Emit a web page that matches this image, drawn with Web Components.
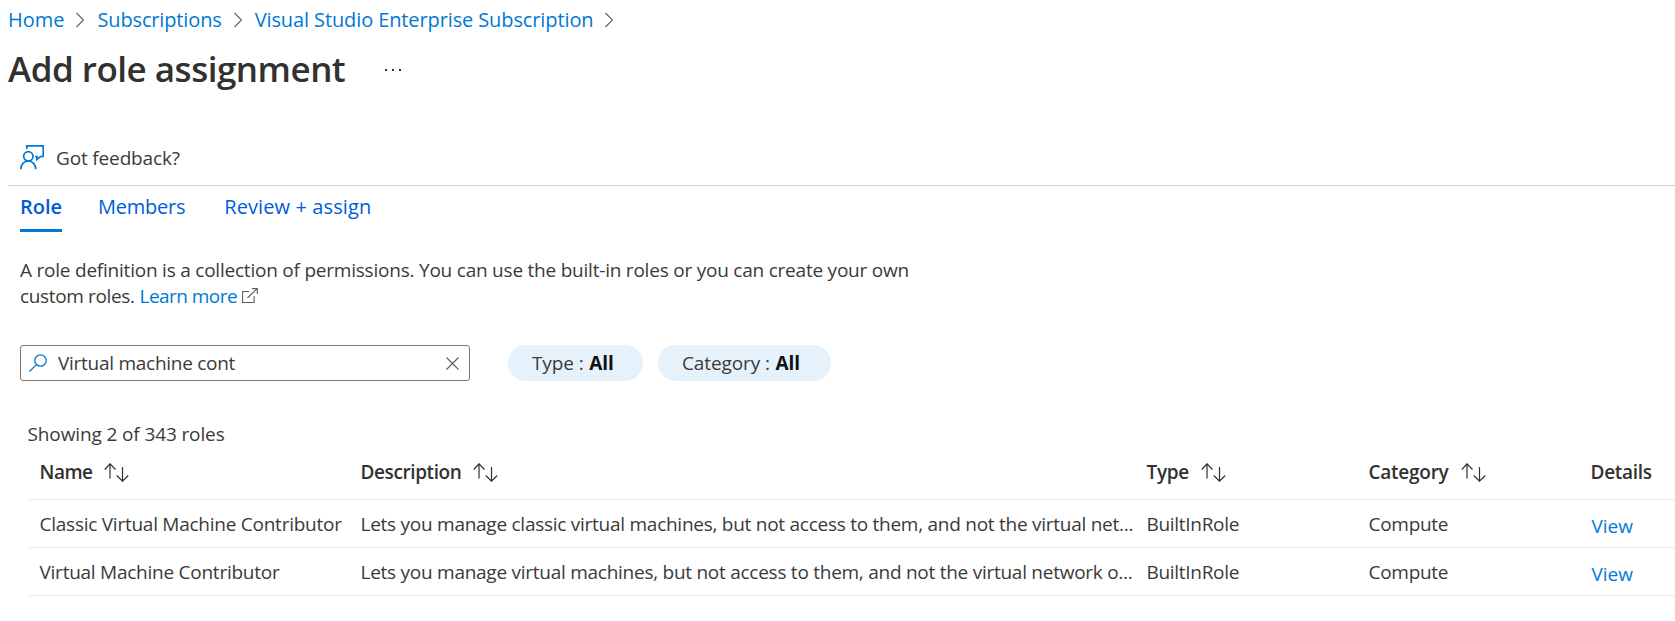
<!DOCTYPE html>
<html lang="en">
<head>
<meta charset="utf-8">
<title>Add role assignment</title>
<style>
html,body{margin:0;background:#fff}
body{font-family:"Open Sans","Noto Sans",sans-serif;font-size:19px;color:#3b3a39;overflow:hidden}
</style>
</head>
<body>
<role-page></role-page>
<script>
const define = (name, html, setup) => {
  const tpl = document.createElement('template');
  tpl.innerHTML = html;
  customElements.define(name, class extends HTMLElement {
    constructor() {
      super();
      this.attachShadow({mode: 'open'}).append(tpl.content.cloneNode(true));
    }
    connectedCallback() { if (setup) setup(this, this.shadowRoot); }
  });
};

// letter-spaced text run
define('ui-text', `<style>:host{display:inline-block;white-space:pre}</style><slot></slot>`, el => {
  if (el.hasAttribute('ls')) el.style.letterSpacing = el.getAttribute('ls') + 'px';
});

define('bread-crumbs', `
<style>
:host{display:flex;align-items:center;height:39px;padding-left:8px;font-size:20px;line-height:38px;color:#0078d4}
svg{flex:none;margin-top:0}
.a{margin:0 13px 0 12px}
</style>
<ui-text ls="-0.02">Home</ui-text>
<svg class="a" width="8" height="16" viewBox="0 0 8 16"><path d="M.5 1 7.5 8 .5 15" fill="none" stroke="#605e5c" stroke-width="1.1"/></svg>
<ui-text ls="-0.14">Subscriptions</ui-text>
<svg class="a" width="8" height="16" viewBox="0 0 8 16"><path d="M.5 1 7.5 8 .5 15" fill="none" stroke="#605e5c" stroke-width="1.1"/></svg>
<ui-text ls="-0.11">Visual Studio Enterprise Subscription</ui-text>
<svg class="a" width="8" height="16" viewBox="0 0 8 16"><path d="M.5 1 7.5 8 .5 15" fill="none" stroke="#605e5c" stroke-width="1.1"/></svg>`);

define('page-title', `
<style>
:host{display:flex;height:60px;padding-left:8px;font-size:35px;font-weight:600;line-height:60px;color:#323130}
svg{margin:30px 0 0 40px}
</style>
<ui-text ls="-0.5"><slot></slot></ui-text>
<svg width="17" height="3" viewBox="0 0 17 3" fill="#323130"><path d="M0 0h2v2H0zM7 0h2v2H7zM14 0h2v2h-2z"/></svg>`);

define('command-bar', `
<style>
:host{display:flex;height:55px;margin:32px 0 0 8px;padding:0 0 0 12px;border-bottom:1px solid #d2d0ce;box-sizing:border-box;line-height:55px}
svg{margin:14px 11px 0 0;flex:none}
</style>
<svg width="25" height="25" viewBox="0 0 25 25" fill="none" stroke="#0078d4" stroke-width="1.7"><circle cx="8.300" cy="11.300" r="4.700"/><path d="M.8 24.200c0-4.700 3.300-8.200 7.500-8.200s7.500 3.500 7.500 8.200M6.800 4V.9h16.400v10.600h-2.700l-3.600 3v-3h-1.800"/></svg>
<ui-text ls="-0.15">Got feedback?</ui-text>`);

define('tab-strip', `
<style>:host{display:flex;height:46px;padding-left:20px;gap:36px;font-size:20px;line-height:42px;color:#015cda}</style>
<slot></slot>`);
define('tab-item', `
<style>:host{display:block;height:46px;box-sizing:border-box}:host([selected]){font-weight:600;border-bottom:3px solid #0078d4}</style>
<ui-text><slot></slot></ui-text>`, (el, r) => { r.querySelector('ui-text').style.letterSpacing = el.getAttribute('ls') + 'px'; });

define('role-intro', `
<style>
:host{display:flex;flex-direction:column;padding:25px 0 0 20px;line-height:26px}
div{display:flex}
.link{color:#0078d4;margin-left:5px}
svg{margin:5px 0 0 5px}
</style>
<div><ui-text ls="-0.22">A role definition is a collection of permissions. You can use the built-in roles or you can create your own</ui-text></div>
<div><ui-text ls="-0.36">custom roles.</ui-text><ui-text class="link" ls="-0.55">Learn more</ui-text>
<svg width="16" height="16" viewBox="0 0 16 16" fill="none" stroke="#605e5c" stroke-width="1.1"><path d="M7 3.500H.6v11h11.500V8M5.500 10 15 .8M10 .6h5.300V6"/></svg></div>`);

define('search-box', `
<style>
:host{display:flex;width:450px;height:36px;box-sizing:border-box;border:1px solid #7a7876;border-radius:3px;line-height:34px;padding:0 10px 0 8px}
.m{margin:8px 11px 0 0}
.x{margin:11px 0 0 auto}
</style>
<svg class="m" width="18" height="18" viewBox="0 0 18 18" fill="none" stroke="#0078d4" stroke-width="1.3"><circle cx="11.500" cy="6.500" r="5.700"/><path d="M7.400 10.600.5 17.500"/></svg>
<ui-text ls="-0.27"><slot></slot></ui-text>
<svg class="x" width="13" height="13" viewBox="0 0 13 13" stroke="#605e5c" stroke-width="1.1"><path d="M.5.5l12 12M12.500.5l-12 12"/></svg>`);

define('filter-pill', `
<style>
:host{display:flex;height:36px;border-radius:18px;background:#e5f1fb;line-height:36px;padding:0 30px 0 24px;box-sizing:border-box}
b{font-weight:700;color:#111;margin-left:5.500px}
</style>
<ui-text ls="-0.1"><slot></slot> :</ui-text><b>All</b>`);

define('filter-bar', `<style>:host{display:flex;padding:36px 0 0 20px}.p{margin-left:38px}.q{margin-left:15px}</style>
<search-box>Virtual machine cont</search-box>
<filter-pill class="p" style="width:135px">Type</filter-pill>
<filter-pill class="q" style="width:173px">Category</filter-pill>`);

define('sort-icon', `<style>:host{display:block;margin-left:12px}svg{display:block}</style>
<svg width="26" height="19" viewBox="0 0 26 19" fill="none" stroke="#323130" stroke-width="1.2"><path d="M6 15.500V.9M.8 6.500 6 .8l5.500 5.700M18.500 4v14.100M12.800 12.500l5.700 5.700 5.700-5.700"/></svg>`);

define('role-row', `
<style>
:host{display:grid;grid-template-columns:321px 786px 222px 222px 1fr;height:48px;box-sizing:border-box;border-bottom:1px solid #edebe9;padding-left:12px;line-height:48px}
:host([head]){height:50px;font-weight:600;line-height:44px;color:#323130;padding-bottom:5px}
</style>
<slot></slot>`);
define('role-cell', `
<style>:host{display:flex;align-items:center;white-space:nowrap}:host([link]){color:#0078d4;padding:2px 0 0 1px;height:48px;box-sizing:content-box;margin-bottom:-4px}
:host([sort]) sort-icon{display:block}sort-icon{display:none}</style>
<ui-text><slot></slot></ui-text><sort-icon></sort-icon>`, (el, r) => { r.querySelector('ui-text').style.letterSpacing = el.getAttribute('ls') + 'px'; });

define('role-table', `
<style>
:host{display:block;padding:38px 0 0 27.500px}
.count{height:31px;line-height:30px}
</style>
<div class="count"><ui-text ls="-0.12">Showing 2 of 343 roles</ui-text></div>
<role-row head><role-cell sort ls="-0.5">Name</role-cell><role-cell sort ls="-0.4">Description</role-cell><role-cell sort ls="-0.3">Type</role-cell><role-cell sort ls="-0.25">Category</role-cell><role-cell ls="-0.3">Details</role-cell></role-row>
<role-row><role-cell ls="-0.25">Classic Virtual Machine Contributor</role-cell><role-cell ls="-0.26">Lets you manage classic virtual machines, but not access to them, and not the virtual net...</role-cell><role-cell ls="-0.3">BuiltInRole</role-cell><role-cell ls="-0.28">Compute</role-cell><role-cell link ls="0">View</role-cell></role-row>
<role-row><role-cell ls="-0.25">Virtual Machine Contributor</role-cell><role-cell ls="-0.26">Lets you manage virtual machines, but not access to them, and not the virtual network o...</role-cell><role-cell ls="-0.3">BuiltInRole</role-cell><role-cell ls="-0.28">Compute</role-cell><role-cell link ls="0">View</role-cell></role-row>`);

define('role-page', `
<style>:host{display:block;width:1675px;height:621px;overflow:hidden}</style>
<bread-crumbs></bread-crumbs>
<page-title>Add role assignment</page-title>
<command-bar></command-bar>
<tab-strip><tab-item selected ls="0">Role</tab-item><tab-item ls="-0.25" style="margin-right:3px">Members</tab-item><tab-item ls="0.1">Review + assign</tab-item></tab-strip>
<role-intro></role-intro>
<filter-bar></filter-bar>
<role-table></role-table>`);
</script>
</body>
</html>
